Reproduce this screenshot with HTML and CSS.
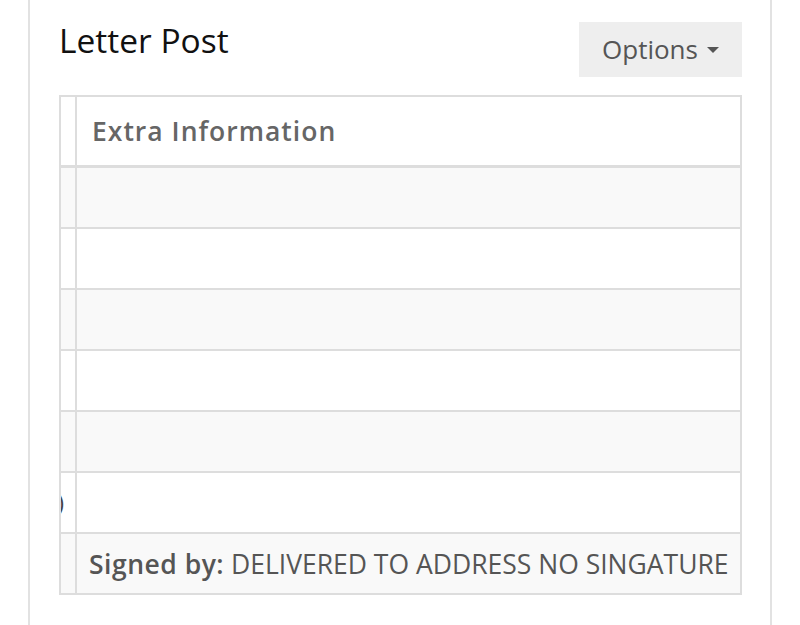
FILE: index.html
```html
<!DOCTYPE html>
<html>
<head>
<meta charset="utf-8">
<link rel="stylesheet" href="styles.css">
</head>
<body>
<div class="panel">
  <div class="panel-head">
    <h2 class="title">Letter Post</h2>
    <button class="btn-options">Options <span class="caret"></span></button>
  </div>
  <table class="info-table">
    <thead>
      <tr><th class="cut"></th><th>Extra Information</th></tr>
    </thead>
    <tbody>
      <tr><td class="cut"></td><td></td></tr>
      <tr><td class="cut"></td><td></td></tr>
      <tr><td class="cut"></td><td></td></tr>
      <tr><td class="cut"></td><td></td></tr>
      <tr><td class="cut"></td><td></td></tr>
      <tr><td class="cut"><span class="tail">)</span></td><td></td></tr>
      <tr><td class="cut"></td><td><strong>Signed by:</strong> DELIVERED TO ADDRESS NO SINGATURE</td></tr>
    </tbody>
  </table>
</div>
</body>
</html>
```
FILE: styles.css
```css
html, body {
  margin: 0;
  padding: 0;
  background: #fff;
  font-family: "Open Sans", "DejaVu Sans", sans-serif;
}
.panel {
  margin-left: 28px;
  width: 744px;
  min-height: 625px;
  box-sizing: border-box;
  border-left: 2px solid #e2e2e2;
  border-right: 2px solid #e2e2e2;
  padding: 22px 28px 0 29px;
}
.panel-head {
  display: flex;
  justify-content: space-between;
  align-items: flex-start;
  height: 73px;
}
.title {
  margin: 0;
  font-weight: 400;
  font-size: 33.5px;
  line-height: 36px;
  color: #111;
  margin-top: 0;
}
.btn-options {
  width: 163px;
  height: 55px;
  border: none;
  background: #eeeeee;
  color: #555;
  font-family: "Open Sans", "DejaVu Sans", sans-serif;
  font-size: 26px;
  padding: 0 0 2px 0;
  display: flex;
  align-items: center;
  justify-content: center;
  gap: 9px;
}
.caret {
  display: inline-block;
  width: 0;
  height: 0;
  border-left: 6.5px solid transparent;
  border-right: 6.5px solid transparent;
  border-top: 6px solid #555;
  margin-top: 3px;
}
.info-table {
  width: 683px;
  border-collapse: collapse;
  border: 2px solid #dddddd;
  table-layout: fixed;
}
.info-table th, .info-table td {
  border: 2px solid #dddddd;
  padding: 0 0 0 12px;
  text-align: left;
  vertical-align: middle;
  white-space: nowrap;
}
.info-table th {
  height: 68px;
  border-bottom-width: 3px;
  font-size: 26.5px;
  font-weight: 600;
  color: #666;
  letter-spacing: 1px;
  padding-left: 15px;
}
.info-table td {
  height: 59px;
  font-size: 26.5px;
  color: #555;
  letter-spacing: 0;
}
.info-table th.cut, .info-table td.cut {
  width: 0px;
  padding: 0 0 0 14px;
  overflow: hidden;
  position: relative;
}
.tail {
  position: absolute;
  left: -4px;
  top: 50%;
  transform: translateY(-55%);
  font-size: 24px;
  color: #444;
}
.info-table tbody tr:nth-child(odd) td {
  background: #f9f9f9;
}
.info-table strong {
  font-weight: 600;
  letter-spacing: 0.5px;
}
```
